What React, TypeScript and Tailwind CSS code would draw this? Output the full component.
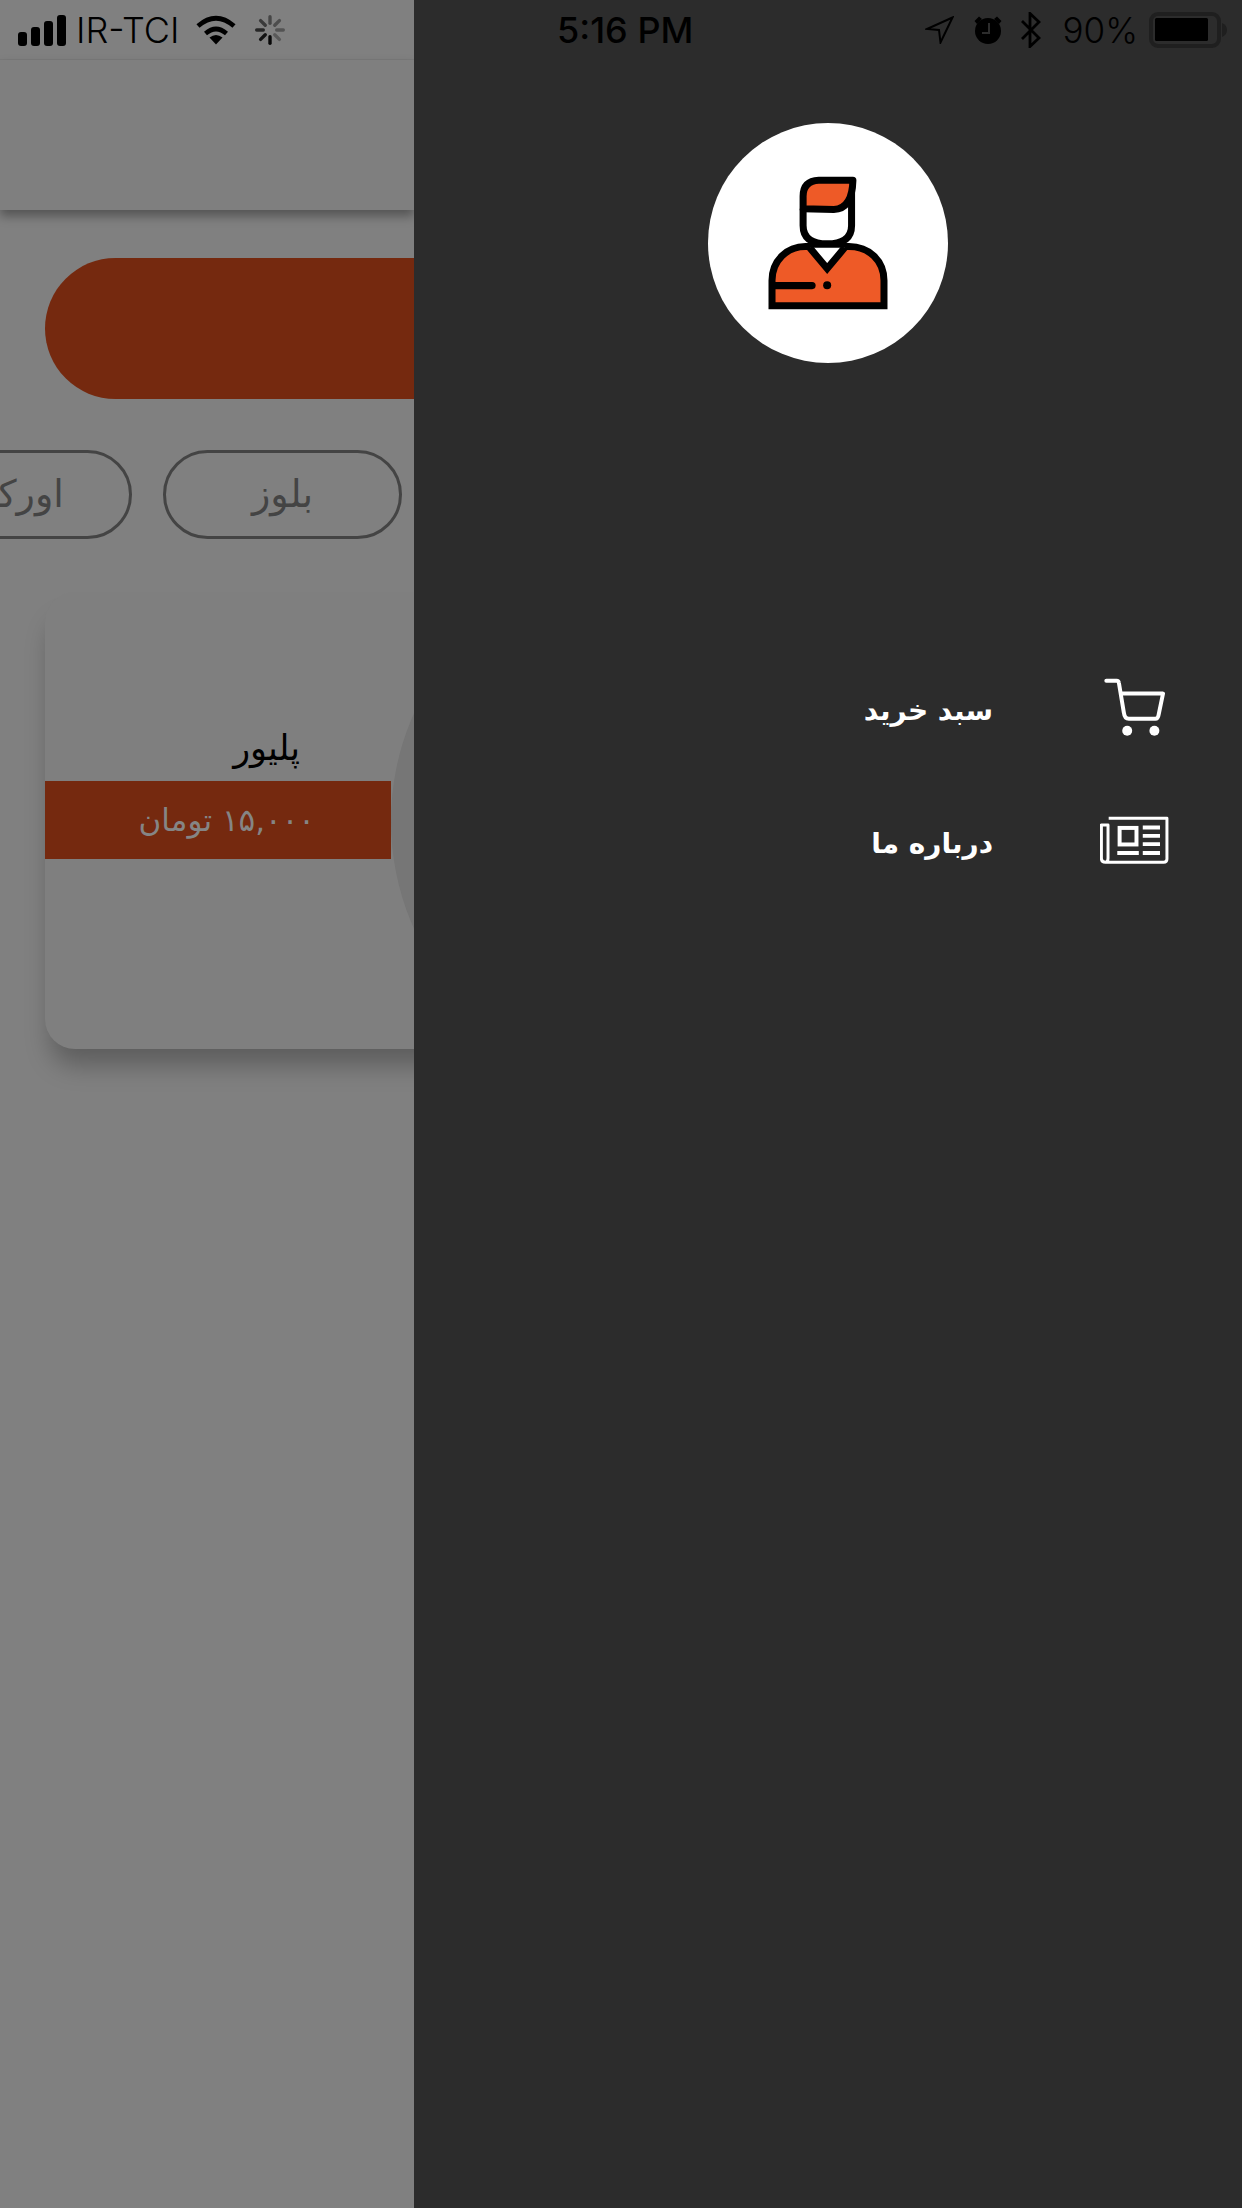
const persian = "font-['DejaVu_Sans','Noto_Sans',sans-serif]";

function LeftStatus() {
  const spokes = [
    [0, 0.95], [45, 0.85], [90, 0.7], [135, 0.55], [180, 0.45], [225, 0.4], [270, 0.35], [315, 0.3],
  ];
  return (
    <div className="flex h-[60px] items-center border-b border-[#7a7a7a] pl-[18px] pt-[1px]">
      <svg width="49" height="32" viewBox="0 0 49 32" className="shrink-0">
        <rect x="0" y="18" width="9" height="14" rx="3" />
        <rect x="13" y="13" width="9" height="19" rx="3" />
        <rect x="26" y="7" width="9" height="25" rx="3" />
        <rect x="39" y="1" width="9" height="31" rx="3" />
      </svg>
      <span className="ml-[9px] font-['Inter',sans-serif] text-[36px] leading-none font-light text-black">
        IR-TCI
      </span>
      <svg width="44" height="32" viewBox="0 0 44 32" className="ml-[15px] shrink-0">
        <path d="M22 30.500 L15.500 23.500 Q22 18.500 28.500 23.500 Z" />
        <path d="M11.500 19.500 Q22 10.500 32.500 19.500" fill="none" stroke="#000" strokeWidth="4.600" />
        <path d="M4 12 Q22 -3.500 40 12" fill="none" stroke="#000" strokeWidth="4.800" />
      </svg>
      <svg width="30" height="30" viewBox="0 0 30 30" className="ml-[17px] shrink-0">
        {spokes.map(([angle, opacity]) => (
          <rect
            key={angle}
            x="13.300"
            y="0"
            width="3.400"
            height="10"
            rx="1.700"
            opacity={opacity}
            transform={`rotate(${angle + 180} 15 15)`}
          />
        ))}
      </svg>
    </div>
  );
}

function RightStatus() {
  return (
    <div className="flex h-[60px] items-center pl-[143px] pr-[15px]">
      <span className="font-['Inter',sans-serif] text-[36px] leading-none font-medium text-black">
        5:16 PM
      </span>
      <div className="ml-auto flex items-center">
        <svg width="29" height="28" viewBox="0 0 29 28" className="shrink-0">
          <path d="M27.500 1.500 L2 13 L14 14 L15.500 26.500 Z" fill="none" stroke="#000" strokeWidth="2" />
        </svg>
        <svg width="28" height="28" viewBox="0 0 28 28" className="ml-[20px] shrink-0">
          <circle cx="14" cy="15" r="13" />
          <path d="M0.500 5 L5 0.500 L8 3 L3 8 Z M27.500 5 L23 0.500 L20 3 L25 8 Z" />
          <path d="M15 7 V17 H8" fill="none" stroke="#2c2c2c" strokeWidth="2" />
        </svg>
        <svg width="21" height="36" viewBox="0 0 21 36" className="ml-[18px] shrink-0">
          <path d="M2 9 L19 26 L10 34.500 V1.500 L19 10 L2 27" fill="none" stroke="#000" strokeWidth="2.800" />
        </svg>
        <span className="ml-[22px] font-['Inter',sans-serif] text-[35px] leading-none font-light text-black">
          90%
        </span>
        <svg width="78" height="36" viewBox="0 0 78 36" className="ml-[11px] shrink-0">
          <rect x="2" y="2" width="68" height="32" rx="7" fill="none" stroke="#1f1f1f" strokeWidth="4" />
          <rect x="6" y="6" width="53" height="23" rx="1.500" />
          <path d="M73 11 Q78 13 78 18 Q78 23 73 25 Z" fill="#1f1f1f" />
        </svg>
      </div>
    </div>
  );
}

function AvatarIcon() {
  return (
    <svg width="122" height="136" viewBox="230 195 365 405">
      <path d="M245 585 V510 C245 450 290 408 345 408 H475 C535 408 580 450 580 510 V585 Z" fill="#ee5a27" stroke="#000" strokeWidth="21" />
      <path d="M338 295 V345 Q338 400 410 400 Q483 400 483 345 V215" fill="#fff" stroke="#000" strokeWidth="21" />
      <path d="M338 295 V258 Q338 212 385 210 H487 Q485 295 430 297 Z" fill="#ee5a27" stroke="#000" strokeWidth="21" strokeLinejoin="round" />
      <path d="M358 412 L410 474 L462 412" fill="#fff" stroke="#000" strokeWidth="21" />
      <path d="M252 525 H365" stroke="#000" strokeWidth="21" strokeLinecap="round" />
      <circle cx="410" cy="524" r="12" />
    </svg>
  );
}

function CartIcon() {
  return (
    <svg width="61" height="60" viewBox="40 23 184 179" fill="none" stroke="#fff" strokeWidth="12" strokeLinecap="round" strokeLinejoin="round">
      <path d="M47 33 H78 Q84 33 85 40 L100 130 Q102 148 115 148 H195 Q203 148 205 135 L218 72 H92" />
      <circle cx="110" cy="184" r="15" fill="#fff" stroke="none" />
      <circle cx="192" cy="184" r="15" fill="#fff" stroke="none" />
    </svg>
  );
}

function NewsIcon() {
  return (
    <svg width="69" height="48" viewBox="26 35 208 145" fill="none" stroke="#fff" strokeWidth="9">
      <path d="M52 42 H228 V165 Q228 175 218 175 H42 Q30 175 30 163 V62 H50 V163 Q50 175 42 175" strokeLinejoin="round" />
      <rect x="85" y="71" width="51" height="50" strokeWidth="12" />
      <path d="M155 70 H207 M155 95 H207 M155 120 H207 M78 147 H143 M155 147 H207" strokeWidth="12" />
    </svg>
  );
}

function MenuRow({ label, icon }: { label: string; icon: React.ReactNode }) {
  return (
    <div dir="rtl" className="flex h-[60px] items-center">
      <div className="flex w-[70px] shrink-0 justify-center">{icon}</div>
      <span className={`mr-[106px] pt-[8px] text-[28px] leading-none font-bold text-white ${persian}`}>
        {label}
      </span>
    </div>
  );
}

export default function App() {
  return (
    <div className="flex h-[2208px] w-[1242px] overflow-hidden bg-[#808080]">
      <div className="w-[414px] shrink-0 overflow-hidden">
        <LeftStatus />
        <div className="h-[150px] w-full bg-[#7f7f7f] shadow-[0_6px_10px_rgba(0,0,0,0.35)]" />

        <div className="ml-[45px] mt-[48px] h-[141px] w-[600px] rounded-full bg-[#75290f]" />

        <div className="mt-[51px] flex justify-end gap-[31px] pr-[12px]">
          {['اورکت', 'بلوز'].map((chip) => (
            <div
              key={chip}
              dir="rtl"
              className={`flex h-[89px] w-[239px] shrink-0 items-center justify-center rounded-full border-[3px] border-[#444444] text-[38px] text-[#444444] ${persian}`}
            >
              {chip}
            </div>
          ))}
        </div>

        <div className="ml-[45px] mt-[53px] flex h-[457px] w-[600px] items-center rounded-[30px] bg-[#7f7f7f] shadow-[0_22px_26px_-6px_rgba(0,0,0,0.28)]">
          <div className="w-[346px] shrink-0 self-start pt-[134px]">
            <div dir="rtl" className={`h-[55px] pr-[91px] text-[35px] leading-[44px] text-black ${persian}`}>
              پلیور
            </div>
            <div dir="rtl" className={`flex h-[78px] items-center bg-[#75290f] pr-[76px] text-[31px] leading-none text-[#858585] ${persian}`}>
              ۱۵,۰۰۰ تومان
            </div>
          </div>
          <div className="h-[528px] w-[528px] shrink-0 rounded-full bg-[#767676]" />
        </div>
      </div>

      <div className="w-[828px] shrink-0 bg-[#2c2c2c]">
        <RightStatus />
        <div className="mt-[63px] flex justify-center">
          <div className="flex h-[240px] w-[240px] items-center justify-center rounded-full bg-white">
            <AvatarIcon />
          </div>
        </div>
        <div className="mt-[314px] flex flex-col gap-[73px] pr-[73px]">
          <MenuRow label="سبد خرید" icon={<CartIcon />} />
          <MenuRow label="درباره ما" icon={<NewsIcon />} />
        </div>
      </div>
    </div>
  );
}
